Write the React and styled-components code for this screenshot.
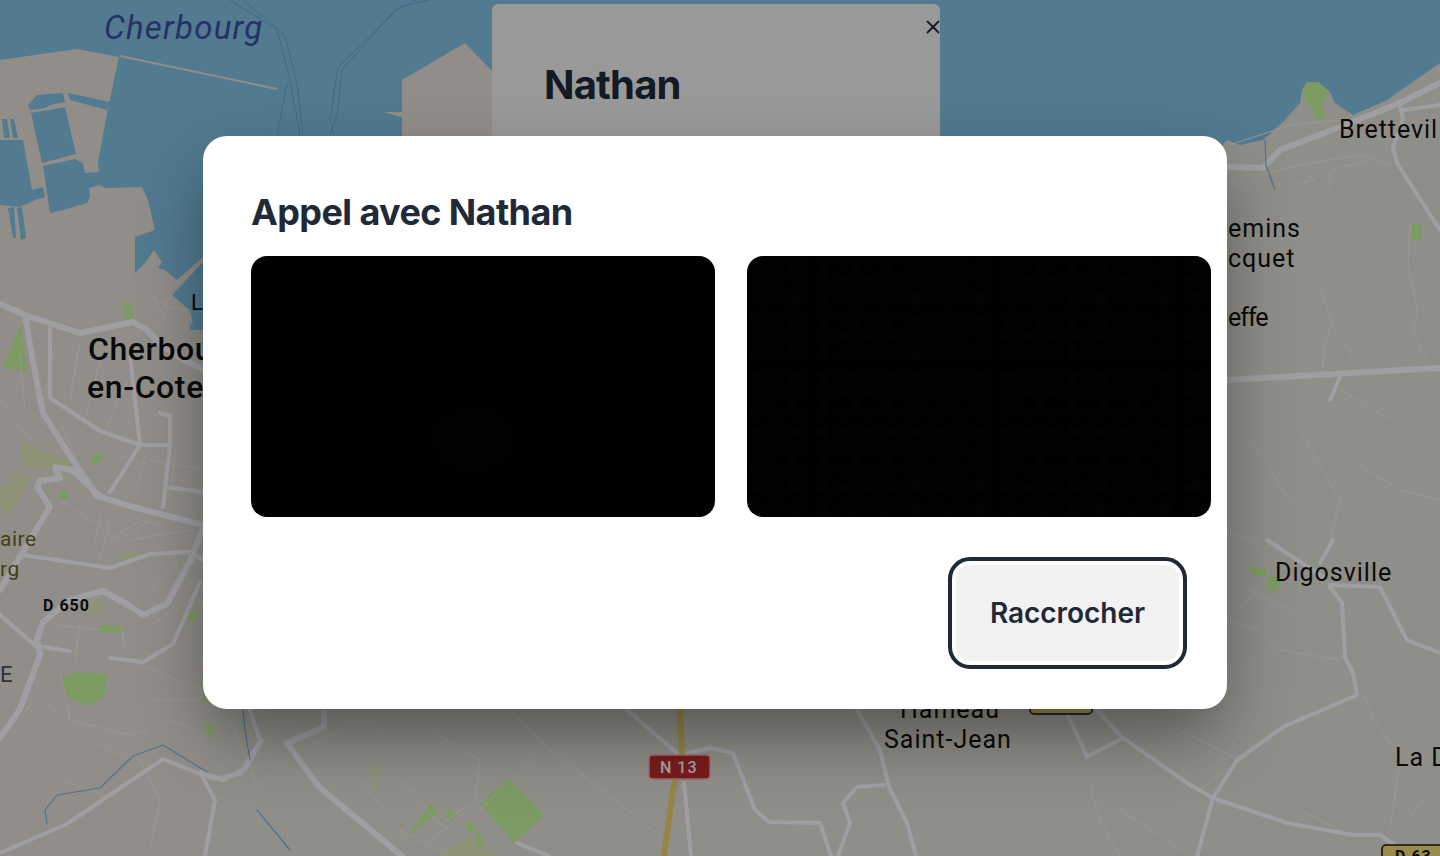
import React from 'react'
import styled, { createGlobalStyle } from 'styled-components'
import { X } from 'lucide-react'

const GlobalStyle = createGlobalStyle`
  html, body {
    margin: 0;
    height: 100%;
    overflow: hidden;
    font-family: Inter, "Liberation Sans", sans-serif;
  }
`

const Page = styled.div`
  position: relative;
  width: 100vw;
  height: 100vh;
  overflow: hidden;
  background: #80bfe1;
`

const MapCanvas = styled.svg`
  position: absolute;
  inset: 0;
  display: block;
`

const ProfileCard = styled.aside`
  position: absolute;
  top: 4px;
  left: 492px;
  width: 396px;
  height: 300px;
  padding: 56px 0 0 52px;
  background: #f0f0f0;
  border-radius: 6px;
`

const CloseIcon = styled(X)`
  position: absolute;
  top: 12px;
  right: -4px;
  color: #1f2937;
`

const ProfileName = styled.h2`
  margin: 0;
  font-size: 40px;
  line-height: 50px;
  font-weight: 700;
  letter-spacing: -0.8px;
  color: #1f2937;
`

const Backdrop = styled.div`
  position: absolute;
  inset: 0;
  display: flex;
  align-items: center;
  justify-content: center;
  padding: 0 10px 11px 0;
  background: rgba(0, 0, 0, 0.36);
`

const Modal = styled.section`
  width: 928px;
  padding: 48px;
  background: #fff;
  border-radius: 24px;
  box-shadow: 0 30px 70px -8px rgba(0, 0, 0, 0.45);
`

const ModalTitle = styled.h3`
  margin: 0 0 16px;
  font-size: 36px;
  line-height: 56px;
  font-weight: 700;
  letter-spacing: -0.6px;
  color: #1f2937;
`

const VideoGrid = styled.div`
  display: grid;
  grid-template-columns: 464px 464px;
  gap: 32px;
`

const LocalVideo = styled.div`
  height: 261px;
  border-radius: 16px;
  background: radial-gradient(ellipse at 48% 70%, #040101, #000 24%);
`

const RemoteVideo = styled.div`
  height: 261px;
  border-radius: 16px;
  background-color: #010101;
  background-image:
    radial-gradient(ellipse 9px 5px at 6px 4px, #050404, transparent),
    radial-gradient(ellipse 7px 9px at 15px 14px, #060403, transparent);
  background-size: 23px 19px, 31px 27px;
`

const Actions = styled.div`
  display: flex;
  justify-content: flex-end;
  margin-top: 48px;
`

const HangUpButton = styled.button`
  width: 223px;
  height: 96px;
  padding: 0;
  border: 0;
  border-radius: 14px;
  background: #f2f2f3;
  outline: 4px solid #1f2937;
  outline-offset: 4px;
  font-family: inherit;
  font-size: 28px;
  font-weight: 600;
  letter-spacing: -0.05px;
  color: #1f2937;
`

const COAST =
  'M0 60 L77 49 L119 57 L107 113 L98 163 L99 172 L85 173 L83 163 L75 159 L43 166 L50 213 L63 210 L87 203 L90 197 L89 188 L100 185 L105 188 L142 187 L148 200 L155 230 L135 237 L135 273 L145 263 L154 250 L162 262 L158 268 L165 270 L177 280 L203 257 L203 856 L0 856 Z'

const SEA_WORKS = [
  'M31 113 L65 107 L76 154 L42 163 Z',
  'M28 105 L37 95 L63 93 L65 102 L50 105 L45 108 L30 110 Z',
  'M68 93 L110 102 L107 110 L70 100 Z',
  'M0 140 L23 140 L32 190 L43 187 L45 197 L35 200 L20 207 L0 205 Z',
  'M2 119 L7 119 L10 138 L4 138 Z',
  'M10 119 L14 119 L18 138 L13 138 Z',
  'M8 208 L14 207 L16 238 L13 238 Z',
  'M17 208 L22 207 L26 238 L21 240 Z',
  'M172 295 L203 262 L203 330 L190 330 L191 315 L187 308 Z',
]

const MAIN_ROADS = [
  'M0 304 L25 315 L80 333 L133 322 L147 330 L160 344 L187 362 L203 369',
  'M25 315 L33 362 L43 413 L70 456 L97 496',
  'M97 496 L133 507 L203 525',
  'M100 496 L72 470 L55 467 L60 478 L40 481 L37 487 L50 507 L33 535 L0 590',
  'M203 528 L190 561 L167 604 L143 615 L127 604 L103 591 L70 600 L43 622 L37 640 L40 655 L20 709 L0 738',
  'M324 713 L324 727 L287 743 L319 787 L402 856',
  'M1227 380 L1440 368',
  'M1227 167 L1263 168 L1280 150 L1340 127 L1400 103 L1440 83',
]

const ROADS = [
  'M50 326 L50 398 L100 431 L140 445 L170 445',
  'M130 355 L140 445 L110 492',
  'M160 413 L170 416 L170 445 L163 507',
  'M167 487 L203 492',
  'M23 555 L110 568 L150 554 L190 552 L203 560',
  'M43 647 L70 651',
  'M110 658 L143 662 L173 644 L200 582',
  'M0 615 L37 647',
  'M0 853 L67 824 L163 759 L213 779 L240 774 L260 741 L250 710',
  'M262 740 L246 768 L223 780 L200 772',
  'M684 783 L691 856',
  'M687 753 L710 748 L733 753 L755 810 L769 822 L820 823 L831 856',
  'M627 710 L677 753',
  'M857 710 L880 750 L889 787 L907 823 L916 856',
  'M884 785 L857 787 L843 803 L850 823 L838 856',
  'M517 843 L549 856',
  'M1097 710 L1123 738 L1187 783 L1213 798 L1287 823 L1353 835 L1380 835 L1397 847',
  'M1067 713 L1087 757 L1123 738',
  'M1213 798 L1237 760 L1283 727 L1357 695 L1353 673 L1345 657 L1342 603 L1330 587',
  'M1213 798 L1197 856',
  'M1330 585 L1380 587 L1407 640 L1440 653',
  'M1267 540 L1323 577',
  'M1333 540 L1320 563',
  'M1403 110 L1440 105',
  'M1400 107 L1403 120 L1393 147 L1397 163 L1427 210 L1440 230',
  'M1340 377 L1330 400',
  'M200 772 L215 800 L205 856',
]

const LANES = [
  'M55 345 L40 420', 'M80 340 L70 400', 'M100 360 L85 420', 'M130 375 L105 430',
  'M150 460 L205 470', 'M60 500 L120 540 L150 520', 'M110 520 L100 560', 'M130 540 L190 530',
  'M60 620 L110 590 L135 620', 'M55 625 L100 630', 'M80 625 L75 660', 'M120 620 L125 650',
  'M60 670 L70 720 L130 735 L170 720 L205 735', 'M130 660 L200 690', 'M150 700 L200 700',
  'M140 760 L160 800 L150 850', 'M230 720 L260 790', 'M60 780 L120 800',
  'M300 750 L360 720 L390 740', 'M430 730 L480 760 L475 800 L440 825 L420 800 L400 780', 'M545 745 L480 810',
  'M545 745 L665 840', 'M430 840 L480 800', 'M400 830 L450 856', 'M510 710 L545 745', 'M360 780 L420 856',
  'M1170 725 L1240 760 L1200 790', 'M1090 785 L1100 820 L1120 856', 'M1240 735 L1213 770', 'M1120 810 L1190 856',
  'M1227 620 L1260 630 L1280 650 L1340 660', 'M1363 695 L1375 720 L1400 760 L1390 830', 'M1300 810 L1350 835', 'M1430 790 L1400 830',
  'M1240 610 L1270 570', 'M1250 590 L1290 610', 'M1227 530 L1260 545',
  'M1230 145 L1290 125 L1340 120', 'M1227 180 L1250 190', 'M1260 175 L1300 165 L1360 155 L1392 165',
  'M1300 170 L1315 180 L1295 185', 'M1330 190 L1330 170 L1370 160', 'M1320 285 L1332 320 L1325 345 L1322 370',
  'M1328 335 L1353 352 L1345 365', 'M1410 220 L1408 270 L1418 310 L1413 330 L1430 370', 'M1340 390 L1392 420',
  'M1350 460 L1400 490 L1440 500', 'M1300 430 L1340 500 L1330 540', 'M1250 440 L1290 500',
  'M153 296 L168 308 L190 310 L192 325', 'M153 296 L165 320 L153 330', 'M172 295 L165 305',
  'M60 420 L80 470', 'M145 455 L135 495', 'M120 455 L150 465', 'M175 455 L170 500', 'M100 515 L95 545',
  'M20 355 L25 410', 'M0 400 L30 440', 'M110 540 L140 520 L160 525', 'M160 545 L175 565 L150 590',
  'M195 590 L205 620', 'M150 625 L190 600', 'M20 720 L40 690 L60 720', 'M90 740 L130 760',
]

const GREEN = [
  'M122 303 L130 302 L134 319 L126 320 Z',
  'M20 326 L3 368 L28 371 Z',
  'M63 676 L75 672 L107 674 L105 695 L90 706 L72 700 L63 690 Z',
  'M480 803 L508 778 L544 815 L514 843 Z',
  'M407 837 L430 803 L439 813 L420 826 Z',
  'M1302 90 L1307 82 L1318 82 L1330 92 L1320 108 L1308 105 Z',
  'M1311 106 L1322 106 L1326 118 L1316 120 Z',
  'M1412 224 L1422 224 L1422 240 L1412 240 Z',
  'M1248 566 L1268 570 L1266 577 L1250 574 Z',
  'M1270 575 L1280 578 L1278 592 L1266 590 Z',
  'M202 675 L203 700 L212 705 Z',
  'M88 460 L98 452 L104 458 L94 466 Z',
  'M60 492 L68 490 L67 500 L60 498 Z',
  'M190 610 L198 612 L196 622 L188 620 Z',
  'M205 723 L215 725 L213 737 L206 733 Z',
  'M446 812 L452 808 L456 816 L450 820 Z',
  'M465 825 L470 820 L475 830 L469 834 Z',
  'M474 837 L479 832 L484 845 L480 848 Z',
  'M100 625 L122 625 L120 632 L100 632 Z',
]

const OLIVE = [
  'M20 442 L70 460 L68 482 L55 465 L25 470 Z',
  'M0 507 L10 517 L30 478 L17 474 L0 490 Z',
  'M118 552 L140 552 L142 560 L120 560 Z',
  'M85 605 L100 596 L108 608 L90 615 Z',
  'M372 768 L380 765 L376 790 L371 785 Z',
  'M440 856 L470 835 L495 856 Z',
]

const RIVERS = [
  'M47 824 L45 810 L57 795 L100 788 L133 756 L163 745 L207 772',
  'M243 710 L245 730 L250 760',
  'M257 810 L290 850',
  'M1265 140 L1266 165 L1275 190',
]

const SHIP_LANES =
  'M230 0 L277 30 L290 80 L300 135 M243 0 L285 35 L297 85 L303 135 M287 83 L277 135 M430 0 L400 7 L338 67 L330 120 L334 135 M416 0 L395 10 L342 70 L337 115 L330 135'

const LABELS = [
  { x: 104, y: 39, t: 'Cherbourg', s: 33, fill: '#3a4f9f', style: 'italic', ls: 1.2 },
  { x: 1339, y: 138, t: 'Brettevil', s: 25, ls: 0.9 },
  { x: 1228, y: 237, t: 'emins', s: 25, ls: 1 },
  { x: 1228, y: 267, t: 'cquet', s: 25, ls: 1 },
  { x: 1228, y: 326, t: 'effe', s: 25, ls: -1 },
  { x: 88, y: 360, t: 'Cherbourg-', s: 32, weight: 500, ls: 0.6 },
  { x: 87, y: 398, t: 'en-Cotentin', s: 32, weight: 500, ls: 0.6 },
  { x: 191, y: 310, t: 'L', s: 22 },
  { x: 0, y: 546, t: 'aire', s: 21, fill: '#6e6420', ls: 0.5 },
  { x: 0, y: 576, t: 'rg', s: 21, fill: '#6e6420', ls: 0.5 },
  { x: 43, y: 611, t: 'D 650', s: 16, weight: 700, ls: 1 },
  { x: 0, y: 682, t: 'E', s: 22, fill: '#4a4a68' },
  { x: 1275, y: 581, t: 'Digosville', s: 25, ls: 1 },
  { x: 900, y: 718, t: 'Hameau', s: 25, ls: 1 },
  { x: 884, y: 748, t: 'Saint-Jean', s: 25, ls: 1 },
  { x: 1395, y: 766, t: 'La D', s: 25, ls: 1 },
]

const pathStroke = (list, stroke, width) =>
  list.map((d) => (
    <path key={d} d={d} fill="none" stroke={stroke} strokeWidth={width} strokeLinejoin="round" strokeLinecap="round" />
  ))

const pathFill = (list, fill) => list.map((d) => <path key={d} d={d} fill={fill} />)

const RoadMap = () => (
  <MapCanvas width="1440" height="856" viewBox="0 0 1440 856" fontFamily="Roboto, sans-serif">
    <path d={COAST} fill="#e3ded6" />
    {pathFill(SEA_WORKS, '#80bfe1')}
    <path d="M120 56 L277 89" stroke="#e3ded6" strokeWidth="2" />
    <path d="M402 80 L465 43 L493 72 L493 140 L402 140 Z" fill="#e3ded6" />
    <path d="M402 112 L383 112 L405 118 L407 128 L402 136 Z" fill="#e3ded6" />
    <path d="M203 160 L1440 160 L1440 856 L203 856 Z" fill="#e1dfd5" />
    <path
      d="M1210 160 L1227 140 L1240 145 L1263 140 L1283 122 L1300 103 L1302 90 L1307 82 L1318 82 L1330 92 L1335 103 L1353 115 L1387 100 L1440 63 L1440 160 Z"
      fill="#e1dfd5"
    />
    <path d={SHIP_LANES} fill="none" stroke="#6ba7cc" strokeWidth="1" />
    {pathFill(OLIVE, '#dfe7bb')}
    {pathFill(GREEN, '#c3f29c')}
    {pathStroke(LANES, '#eeede5', 1)}
    {pathStroke(ROADS, '#f8f8ff', 4)}
    {pathStroke(MAIN_ROADS, '#f8f8ff', 6)}
    {pathStroke(RIVERS, '#78b4e0', 1.2)}
    <path d="M680 705 L682 753 L673 790 L664 856" fill="none" stroke="#ecd070" strokeWidth="6" />
    {LABELS.map((l) => (
      <text
        key={l.t}
        x={l.x}
        y={l.y}
        fontSize={l.s}
        fontStyle={l.style}
        fontWeight={l.weight || 400}
        letterSpacing={l.ls}
        fill={l.fill || '#111'}
      >
        {l.t}
      </text>
    ))}
    <rect x="649" y="755" width="61" height="24" rx="4" fill="#bf2c2c" stroke="#f0b0b0" strokeWidth="1.5" />
    <text x="660" y="773" fontSize="16" fontWeight="500" letterSpacing="1" fill="#fff">N 13</text>
    <rect x="1030" y="690" width="62" height="24" rx="4" fill="#f0da78" stroke="#111" strokeWidth="1.5" />
    <rect x="1382" y="845" width="70" height="24" rx="4" fill="#f0da78" stroke="#111" strokeWidth="1.5" />
    <text x="1395" y="862" fontSize="16" fontWeight="700" letterSpacing="1" fill="#111">D 63</text>
  </MapCanvas>
)

const App = () => (
  <Page>
    <GlobalStyle />
    <RoadMap />
    <ProfileCard>
      <CloseIcon size={22} strokeWidth={2} />
      <ProfileName>Nathan</ProfileName>
    </ProfileCard>
    <Backdrop>
      <Modal>
        <ModalTitle>Appel avec Nathan</ModalTitle>
        <VideoGrid>
          <LocalVideo />
          <RemoteVideo />
        </VideoGrid>
        <Actions>
          <HangUpButton>Raccrocher</HangUpButton>
        </Actions>
      </Modal>
    </Backdrop>
  </Page>
)

export default App
